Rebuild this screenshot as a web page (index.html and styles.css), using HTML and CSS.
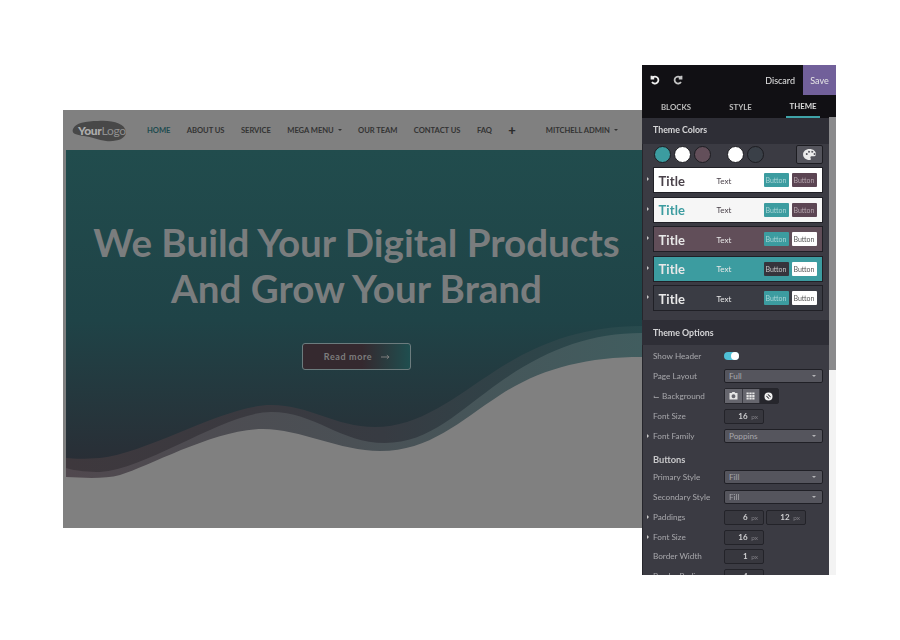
FILE: index.html
```html
<!DOCTYPE html>
<html lang="en">
<head>
<meta charset="utf-8">
<title>Website builder</title>
<link rel="stylesheet" href="styles.css">
</head>
<body>
<main class="stage">
  <section class="site">
    <header class="nav">
      <div class="logo">
        <svg class="logo-blob" viewBox="0 0 54 22"><path d="M1 9C3 3 14 1 26 1C40 0 53 3 54 12C54 19 44 22 34 21C26 20 20 17 12 16C5 15 -1 14 1 9Z"/></svg>
        <span class="logo-text"><b>Your</b>Logo</span>
      </div>
      <nav class="menu">
        <a class="active">HOME</a>
        <a>ABOUT US</a>
        <a>SERVICE</a>
        <a class="caret">MEGA MENU</a>
        <a>OUR TEAM</a>
        <a>CONTACT US</a>
        <a>FAQ</a>
        <a class="plus">+</a>
      </nav>
      <a class="user caret">MITCHELL ADMIN</a>
    </header>
    <div class="hero">
      <svg class="waves" viewBox="66 150 576 378" preserveAspectRatio="none">
        <defs>
          <linearGradient id="w1"><stop offset="0" stop-color="#3e383d"/><stop offset=".55" stop-color="#373b42"/><stop offset="1" stop-color="#284b4e"/></linearGradient>
          <linearGradient id="w2"><stop offset="0" stop-color="#50484e"/><stop offset=".5" stop-color="#4a5055"/><stop offset="1" stop-color="#415d5f"/></linearGradient>
        </defs>
        <path fill="url(#w1)" d="M66 458C75 459 85 459 100 458C150 452 225 405 271 405C310 405 335 427 375 427C420 427 455 397 495 371C535 345 580 326 642 326V528H66Z"/>
        <path fill="url(#w2)" d="M66 468C75 471 90 472 100 472C150 468 225 412 271 412C315 412 340 443 385 443C430 443 460 410 500 382C545 350 590 333 642 333V528H66Z"/>
        <path fill="#808080" d="M66 477C85 478 105 479 120 475C150 466 215 429 263 429C300 429 340 451 380 451C430 451 460 421 500 395C540 369 585 357 642 357V528H66Z"/>
      </svg>
      <div class="hero-copy">
        <h1>We Build Your Digital Products<br>And Grow Your Brand</h1>
        <a class="cta">Read more
          <svg class="cta-arrow" viewBox="0 0 10 6"><path d="M0 3H8M6.500 1L9 3L6.500 5"/></svg>
        </a>
      </div>
    </div>
  </section>

  <aside class="panel">
    <div class="panel-body">
      <div class="topbar">
        <svg class="hist" viewBox="0 0 10 10"><path d="M2.500 2.500A3.500 3.500 0 1 1 2 7M1.500 0.800V3.500H4.200"/></svg>
        <svg class="hist redo" viewBox="0 0 10 10"><path d="M7.500 2.500A3.500 3.500 0 1 0 8 7M8.500 0.800V3.500H5.800"/></svg>
        <span class="discard">Discard</span>
        <span class="save">Save</span>
      </div>
      <div class="tabs">
        <span class="tab tab-a">BLOCKS</span>
        <span class="tab tab-b">STYLE</span>
        <span class="tab tab-on">THEME</span>
      </div>
      <h2 class="sec">Theme Colors</h2>
      <div class="dots">
        <i class="dot c-teal"></i><i class="dot c-white"></i><i class="dot c-mauve"></i>
        <i class="dot c-white dot-gap"></i><i class="dot c-dark"></i>
        <span class="pal-btn">
          <svg viewBox="0 0 14 12"><path fill-rule="evenodd" d="M7 0C3 0 0 2.600 0 6C0 9.400 3 12 7 12C8.600 12 8.800 11 8.200 10C7.600 9 8.200 8 9.600 8H11.500C13 8 14 7 14 5.600C14 2.400 11 0 7 0ZM3 5.500A1 1 0 1 0 3 5.490ZM5.500 3A1 1 0 1 0 5.500 2.990ZM9 3A1 1 0 1 0 9 2.990ZM11.500 5.500A1 1 0 1 0 11.500 5.490Z"/></svg>
        </span>
      </div>
      <div class="cards">
        <div class="card-row"><i class="tri"></i><div class="card p-white"><span class="c-title">Title</span><span class="c-text">Text</span><span class="c-btns"><b class="b-teal">Button</b><b class="b-mauve">Button</b></span></div></div>
        <div class="card-row"><i class="tri"></i><div class="card p-white tint"><span class="c-title">Title</span><span class="c-text">Text</span><span class="c-btns"><b class="b-teal">Button</b><b class="b-mauve">Button</b></span></div></div>
        <div class="card-row"><i class="tri"></i><div class="card p-mauve"><span class="c-title">Title</span><span class="c-text">Text</span><span class="c-btns"><b class="b-teal">Button</b><b class="b-white">Button</b></span></div></div>
        <div class="card-row"><i class="tri"></i><div class="card p-teal"><span class="c-title">Title</span><span class="c-text">Text</span><span class="c-btns"><b class="b-dark">Button</b><b class="b-white">Button</b></span></div></div>
        <div class="card-row"><i class="tri"></i><div class="card p-dark"><span class="c-title">Title</span><span class="c-text">Text</span><span class="c-btns"><b class="b-teal">Button</b><b class="b-white">Button</b></span></div></div>
      </div>
      <h2 class="sec sec-opts">Theme Options</h2>
      <div class="opts">
        <div class="opt"><label>Show Header</label><span class="toggle"></span></div>
        <div class="opt"><label>Page Layout</label><span class="sel">Full</span></div>
        <div class="opt"><label>⌙ Background</label>
          <span class="seg">
            <span class="seg-i"><svg viewBox="0 0 10 9"><path fill-rule="evenodd" d="M3 1L3.800 0H6.200L7 1H9.500V8.500H0.500V1ZM5 2.500A2.200 2.200 0 1 0 5 6.900A2.200 2.200 0 1 0 5 2.500Z"/></svg></span>
            <span class="seg-i"><svg viewBox="0 0 10 9"><path d="M0.500 0.500H3V2.500H0.500ZM3.700 0.500H6.300V2.500H3.700ZM7 0.500H9.500V2.500H7ZM0.500 3.300H3V5.500H0.500ZM3.700 3.300H6.300V5.500H3.700ZM7 3.300H9.500V5.500H7ZM0.500 6.300H3V8.500H0.500ZM3.700 6.300H6.300V8.500H3.700ZM7 6.300H9.500V8.500H7Z"/></svg></span>
            <span class="seg-i seg-on"><svg viewBox="0 0 10 10"><path fill-rule="evenodd" d="M5 0.500A4.500 4.500 0 1 0 5 9.500A4.500 4.500 0 1 0 5 0.500ZM2.800 3.800L3.800 2.800L7.200 6.200L6.200 7.200ZM2.500 5A2.500 2.500 0 0 1 5 2.500L7.500 5A2.500 2.500 0 0 1 5 7.500Z"/></svg></span>
          </span>
        </div>
        <div class="opt"><label>Font Size</label><span class="num"><b>16</b> px</span></div>
        <div class="opt"><i class="tri tri-opt"></i><label>Font Family</label><span class="sel">Poppins</span></div>
        <h3 class="sub">Buttons</h3>
        <div class="opt"><label>Primary Style</label><span class="sel">Fill</span></div>
        <div class="opt"><label>Secondary Style</label><span class="sel">Fill</span></div>
        <div class="opt"><i class="tri tri-opt"></i><label>Paddings</label><span class="num"><b>6</b> px</span><span class="num"><b>12</b> px</span></div>
        <div class="opt"><i class="tri tri-opt"></i><label>Font Size</label><span class="num"><b>16</b> px</span></div>
        <div class="opt opt-tight"><label>Border Width</label><span class="num"><b>1</b> px</span></div>
        <div class="opt"><label>Border Radius</label><span class="num"><b>4</b> px</span></div>
      </div>
    </div>
    <div class="scroll"><div class="thumb"></div></div>
  </aside>
</main>
</body>
</html>
```

FILE: styles.css
```css
* { box-sizing: border-box; }
html, body { margin: 0; height: 100%; background: #fff; }
body { font-family: Lato, "Liberation Sans", sans-serif; overflow: hidden; }
h1, h2, h3 { margin: 0; }

.stage { display: flex; align-items: flex-start; padding: 65px 0 0 63px; width: 900px; height: 640px; filter: blur(.35px); }

/* dimmed website */
.site { width: 579px; height: 418px; margin-top: 45px; background: #808080; display: flex; flex-direction: column; flex: none; }
.nav { height: 40px; display: flex; align-items: center; padding-left: 9px; flex: none; }
.logo { width: 54px; height: 22px; position: relative; flex: none; margin-top: 1px; }
.logo-blob { width: 54px; height: 22px; display: block; fill: #484848; }
.logo-text { position: absolute; left: 6px; top: 3px; font-size: 12px; line-height: 16px; color: #909090; font-weight: 400; letter-spacing: -.3px; }
.logo-text b { color: #adadad; font-weight: 900; }
.menu { display: flex; align-items: center; margin-left: 21px; gap: 16.500px; flex: none; }
.menu a, .user { font-size: 7.600px; font-weight: 700; color: #333; white-space: nowrap; letter-spacing: -.05px; }
.menu a.active { color: #1e4b4f; }
.menu a.plus { font-size: 13px; line-height: 10px; font-weight: 900; color: #2c2c2c; }
.caret::after { content: ""; display: inline-block; margin-left: 4px; vertical-align: 2px; border: 2px solid transparent; border-top-color: #333; border-bottom: 0; }
.user { margin-left: 30px; }

.hero { flex: 1; margin-left: 3px; position: relative; background: linear-gradient(#214c4d 0%, #1f4347 45%, #2a2c34 86%); }
.waves { position: absolute; inset: 0; width: 100%; height: 100%; display: block; }
.hero-copy { position: relative; display: flex; flex-direction: column; align-items: center; padding-top: 69px; margin-left: 5px; }
h1 { font-size: 38.600px; line-height: 46px; font-weight: 700; color: #7a7d7e; text-align: center; white-space: nowrap; }
.cta { margin-top: 32px; width: 109px; height: 27px; border: 1px solid #6c7c7e; border-radius: 3px; display: flex; align-items: center; justify-content: center; gap: 9px; padding-left: 1px; font-size: 9px; font-weight: 700; letter-spacing: .6px; color: #7d7d7d; background: linear-gradient(90deg, #35292f 0%, #35292f 55%, #1f4e4f 100%); }
.cta-arrow { width: 9px; height: 6px; fill: none; stroke: #7d7d7d; stroke-width: 1.100; }

/* builder panel */
.panel { width: 194px; height: 510px; flex: none; display: flex; background: #3b3b43; overflow: hidden; color: #c9c9cc; box-shadow: inset 1px 0 #26262c; }
.panel-body { width: 187px; flex: none; display: flex; flex-direction: column; }
.scroll { width: 7px; margin-top: 52px; background: #f3f3f3; flex: none; }
.thumb { height: 253px; background: #8a8a8c; }

.topbar { height: 30px; background: #111014; display: flex; align-items: center; padding-left: 8px; flex: none; width: 194px; }
.hist { width: 10px; height: 10px; fill: none; stroke: #f0f0f0; stroke-width: 1.800; flex: none; }
.hist.redo { margin-left: 13px; stroke: #c4c4c4; }
.discard { margin-left: auto; margin-right: 8px; font-size: 9px; color: #e4e4e4; }
.save { width: 33px; height: 30px; background: #71609a; display: flex; align-items: center; justify-content: center; font-size: 9px; color: #e6e6e6; }
.tabs { height: 23px; background: #111014; display: flex; flex: none; width: 194px; }
.tab { font-size: 7.800px; font-weight: 700; color: #bdbdbd; display: flex; align-items: center; justify-content: center; }
.tab-a { width: 68px; }
.tab-b { width: 61px; }
.tab-on { color: #ddd; border-bottom: 2px solid #3fa3a8; width: 34px; margin-left: 15px; }
.sec { height: 26px; background: #2e2e36; padding-left: 11px; font-size: 8.800px; font-weight: 700; line-height: 24px; color: #d6d6d8; flex: none; }
.sec-opts { margin-top: 9px; height: 25px; line-height: 25px; }

.dots { display: flex; align-items: center; padding: 0 6px 0 12px; height: 21px; margin-top: 1px; }
.dot { width: 17px; height: 17px; border-radius: 50%; border: 1px solid #1d1d22; margin-right: 3px; flex: none; }
.dot-gap { margin-left: 13px; }
.c-teal { background: #3c9ca0; }
.c-white { background: #fff; }
.c-mauve { background: #634f5a; }
.c-dark { background: #3a4048; }
.pal-btn { margin-left: auto; width: 27px; height: 19px; border: 1px solid #1d1d22; border-radius: 2px; background: #54545c; display: flex; align-items: center; justify-content: center; }
.pal-btn svg { width: 13px; height: 11px; fill: #ececec; }

.cards { display: flex; flex-direction: column; gap: 3.500px; margin-top: 3px; padding-left: 5px; }
.card-row { display: flex; align-items: center; gap: 3.500px; height: 26px; }
.tri { width: 0; height: 0; border-left: 2.500px solid #c8c8c8; border-top: 2.500px solid transparent; border-bottom: 2.500px solid transparent; flex: none; margin-bottom: 2px; }
.card { width: 170px; height: 26px; border: 1px solid #202026; display: flex; align-items: center; padding: 0 5px 0 5px; flex: none; }
.c-title { width: 58px; font-size: 13px; font-weight: 700; letter-spacing: .1px; padding-top: 1px; }
.c-text { font-size: 8px; padding-top: 1px; }
.c-btns { margin-left: auto; display: flex; gap: 3px; }
.c-btns b { width: 25px; height: 14px; font-size: 7px; font-weight: 400; display: flex; align-items: center; justify-content: center; border-radius: 1px; }
.p-white { background: #fff; color: #4a424a; }
.tint { background: #f6f6f6; }
.tint .c-title { color: #3c9ca0; }
.p-mauve { background: #614e59; color: #e8e8e8; }
.p-teal { background: #3c9ca0; color: #e8e8e8; }
.p-dark { background: #3a3c44; color: #e8e8e8; }
.b-teal { background: #3c9ca0; color: #a9d5d6; }
.b-mauve { background: #5c4553; color: #b5a6ae; }
.b-white { background: #fff; color: #555; }
.b-dark { background: #36343c; color: #c8c8c8; }

.opts { padding: 1px 0 0 11px; display: flex; flex-direction: column; }
.opt { height: 20px; display: flex; align-items: center; gap: 2px; font-size: 8.200px; position: relative; flex: none; }
.opt-tight { margin-top: -1px; }
.opt label { width: 69px; flex: none; color: #a8a8ac; }
.tri-opt { position: absolute; left: -6px; top: 8px; margin: 0; }
.toggle { width: 15px; height: 8px; border-radius: 4px; background: #4fc0d6; position: relative; }
.toggle::after { content: ""; position: absolute; right: 0; top: 0; width: 8px; height: 8px; border-radius: 50%; background: #fff; }
.sel { width: 99px; height: 14px; border: 1px solid #202026; border-radius: 2px; background: #55555d; padding-left: 4px; line-height: 12px; color: #a6a6ab; position: relative; }
.sel::after { content: ""; position: absolute; right: 6px; top: 5px; border: 2.500px solid transparent; border-top-color: #b5b5b8; border-bottom: 0; }
.seg { display: flex; border: 1px solid #26262c; border-radius: 2px; }
.seg-i { width: 17.500px; height: 14px; background: #66666e; display: flex; align-items: center; justify-content: center; border-right: 1px solid #3b3b43; }
.seg-i svg { width: 9px; height: 8px; fill: #e6e6e6; }
.seg-on { background: #26262c; border: 0; }
.seg-on svg { height: 9px; fill: #f2f2f2; }
.num { width: 40px; height: 15px; border: 1px solid #232329; border-radius: 2px; background: #37373e; text-align: right; padding-right: 5px; line-height: 13px; font-size: 6.500px; color: #807f85; }
.num b { font-size: 8px; color: #d0d0d2; font-weight: 700; margin-right: 2px; }
.sub { font-size: 9.300px; font-weight: 700; color: #c8c8ca; height: 15px; line-height: 15px; margin-top: 6px; flex: none; }
```
